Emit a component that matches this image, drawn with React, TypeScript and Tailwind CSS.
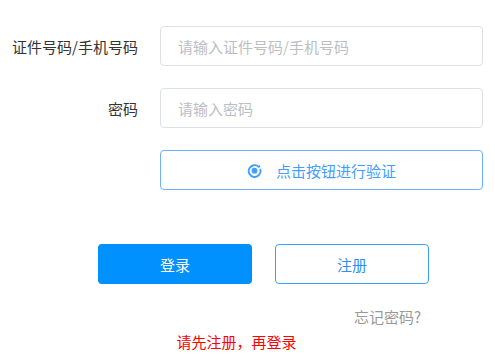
import React from "react";

function VerifyIcon() {
  return (
    <svg width="15" height="15" viewBox="0 0 16 16" fill="none">
      <path d="M12.6 4.2 A6.3 6.3 0 1 0 14.2 7" stroke="#409eff" strokeWidth="2" strokeLinecap="round" fill="none" />
      <circle cx="8" cy="8.2" r="3.1" fill="#409eff" />
      <circle cx="13.2" cy="3.4" r="1.1" fill="#409eff" />
    </svg>
  );
}

export default function App() {
  const font = { fontFamily: '"Noto Sans CJK SC", "Microsoft YaHei", sans-serif' };
  return (
    <div className="w-[495px] h-[360px] bg-white text-[15px] leading-none" style={font}>
      <div className="pt-[26px] flex flex-col gap-[22px]">
        <div className="flex items-center h-[40px]">
          <div className="w-[138px] text-right text-[#333]">证件号码/手机号码</div>
          <div className="ml-[22px] w-[323px] h-[40px] border border-[#dcdfe6] rounded-[4px] flex items-center px-[17px] text-[#bbbec4]">
            请输入证件号码/手机号码
          </div>
        </div>
        <div className="flex items-center h-[40px]">
          <div className="w-[138px] text-right text-[#333]">密码</div>
          <div className="ml-[22px] w-[323px] h-[40px] border border-[#dcdfe6] rounded-[4px] flex items-center px-[17px] text-[#bbbec4]">
            请输入密码
          </div>
        </div>
        <div className="flex items-center h-[40px]">
          <div className="ml-[160px] w-[323px] h-[40px] border border-[#6cb0ff] rounded-[4px] flex items-center justify-center gap-[14px] text-[#409eff]">
            <VerifyIcon />
            <span>点击按钮进行验证</span>
          </div>
        </div>
      </div>
      <div className="mt-[54px] flex gap-[23px] pl-[98px]">
        <div className="w-[154px] h-[40px] rounded-[4px] bg-[#0091ff] text-white flex items-center justify-center">登录</div>
        <div className="w-[154px] h-[40px] rounded-[4px] border border-[#3c9cff] text-[#2f8ff5] bg-white flex items-center justify-center">注册</div>
      </div>
      <div className="mt-[25px] flex justify-end pr-[74px] text-[#999]">忘记密码?</div>
      <div className="mt-[10px] flex justify-center pl-[-1px] text-[#ff0000]">
        <span className="ml-[-22px]">请先注册，再登录</span>
      </div>
    </div>
  );
}
